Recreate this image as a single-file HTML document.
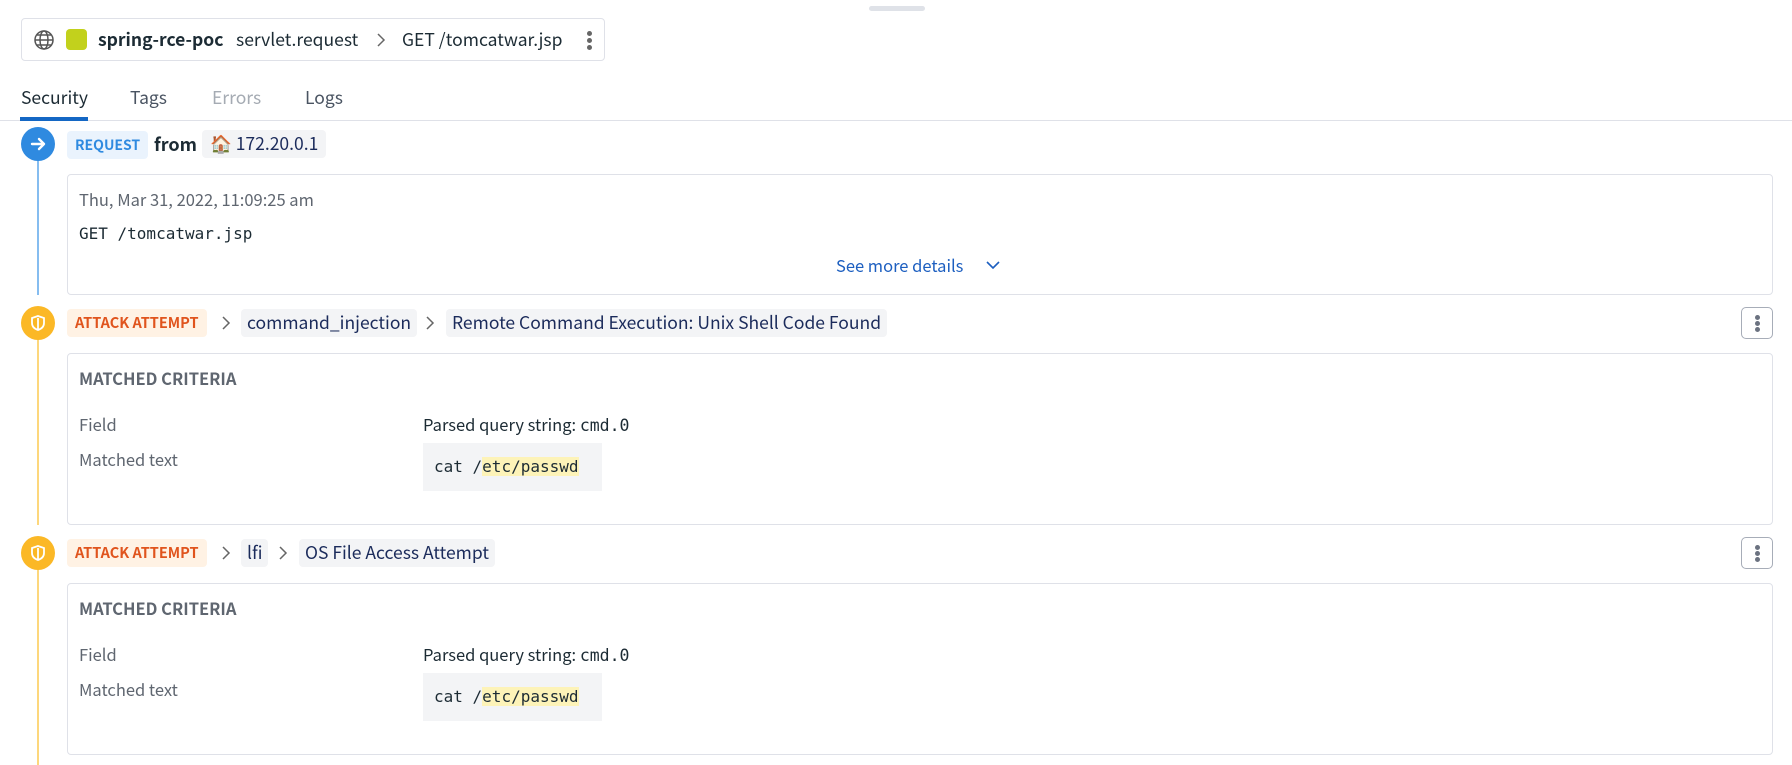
<!DOCTYPE html>
<html><head><meta charset="utf-8"><style>
*{box-sizing:border-box;margin:0;padding:0}
body{width:1792px;height:764px;background:#fff;font-family:"Noto Sans CJK SC","Liberation Sans",sans-serif;color:#1c2b34;position:relative;overflow:hidden;font-size:17px}
.a{position:absolute;white-space:nowrap}
.mono{font-family:"DejaVu Sans Mono","Liberation Mono",monospace}
.pill{position:absolute;height:26px;line-height:26px;border-radius:4px;padding:0 6px;font-size:17.5px}
.card{position:absolute;left:67px;right:19px;border:1px solid #dfe1e8;border-radius:4px}
.keb{position:absolute;left:1741px;width:32px;height:32px;border:1px solid #a7adb8;border-radius:5px}
.keb i{position:absolute;left:13px;width:5px;height:5px;border-radius:50%;background:#6b7280}
.chev{position:absolute}
</style></head><body>
<div class="a" style="left:869px;top:6px;width:56px;height:5px;border-radius:3px;background:#dfe2e8"></div>
<div class="a" style="left:21px;top:18px;width:584px;height:43px;border:1px solid #dfe1e8;border-radius:4px"></div>
<svg class="a" style="left:33px;top:29px" width="22" height="22" viewBox="0 0 22 22" fill="none" stroke="#555" stroke-width="1.5"><circle cx="11" cy="11" r="9"/><ellipse cx="11" cy="11" rx="4" ry="9"/><path d="M2 11h18M4 6h14M4 16h14"/></svg>
<div class="a" style="left:66px;top:29px;width:21px;height:21px;border-radius:4px;background:#c2d11c"></div>
<div class="a" style="left:98px;top:27px;font-weight:700;font-size:17.5px">spring-rce-poc</div>
<div class="a" style="left:236px;top:27px;font-size:17.5px">servlet.request</div>
<svg class="a" style="left:375px;top:33px" width="12" height="14" viewBox="0 0 12 14" fill="none" stroke="#666" stroke-width="1.5"><path d="M3 1l6 6-6 6"/></svg>
<div class="a" style="left:402px;top:27px;font-size:17.5px">GET /tomcatwar.jsp</div>
<div class="a" style="left:587px;top:31px;width:5px;height:5px;border-radius:50%;background:#666;box-shadow:0 7px 0 #666,0 14px 0 #666"></div>

<div class="a" style="left:21px;top:85px;font-size:17.5px">Security</div>
<div class="a" style="left:130px;top:85px;font-size:17.5px;color:#4a5462">Tags</div>
<div class="a" style="left:212px;top:85px;font-size:17.5px;color:#a5abb3">Errors</div>
<div class="a" style="left:305px;top:85px;font-size:17.5px;color:#4a5462">Logs</div>
<div class="a" style="left:0;top:120px;width:1792px;height:1px;background:#dfe1e8"></div>
<div class="a" style="left:20px;top:117px;width:68px;height:4px;background:#1467c4"></div>

<div class="a" style="left:37px;top:150px;width:2px;height:145px;background:#86bdf0"></div>
<div class="a" style="left:21px;top:127px;width:34px;height:34px;border-radius:50%;background:#2f8ae0"></div>
<svg class="a" style="left:28px;top:134px" width="20" height="20" viewBox="0 0 20 20" fill="none" stroke="#fff" stroke-width="2.4" stroke-linecap="round" stroke-linejoin="round"><path d="M4 10h12M11 5l5 5-5 5"/></svg>
<div class="pill" style="left:67px;top:131px;background:#eaf3fd;color:#2f8ae0;font-weight:700;font-size:14px;padding:0 8px;height:28px;line-height:28px">REQUEST</div>
<div class="a" style="left:154px;top:131px;font-weight:700;font-size:18px">from</div>
<div class="pill" style="left:202px;top:130px;background:#f3f4f6;color:#1b2b5b;height:28px;line-height:28px;padding:0 8px">🏠 172.20.0.1</div>
<div class="card" style="top:174px;height:121px"></div>
<div class="a" style="left:79px;top:187px;font-size:16.5px;color:#5f6670">Thu, Mar 31, 2022, 11:09:25 am</div>
<div class="a mono" style="left:79px;top:224px;font-size:16px">GET /tomcatwar.jsp</div>
<div class="a" style="left:836px;top:253px;font-size:16.5px;color:#1d5fc0">See more details</div>
<svg class="a" style="left:985px;top:259px" width="16" height="12" viewBox="0 0 16 12" fill="none" stroke="#1d5fc0" stroke-width="1.6"><path d="M2 3l6 6 6-6"/></svg>

<!-- attack 1 -->
<div class="a" style="left:37px;top:335px;width:2px;height:190px;background:#fdd77c"></div>
<div class="a" style="left:21px;top:306px;width:34px;height:34px;border-radius:50%;background:#fbb826"></div>
<svg class="a" style="left:29px;top:314px" width="18" height="18" viewBox="0 0 18 18" fill="none" stroke="#fff" stroke-width="1.8"><path d="M9 2l6 2v5c0 4-3 6-6 7-3-1-6-3-6-7V4z"/><path d="M9 4v11"/></svg>
<div class="pill" style="left:67px;top:309px;background:#fff2e4;color:#e0541d;font-weight:700;font-size:14.5px;padding:0 8px;height:28px;line-height:28px">ATTACK ATTEMPT</div>
<svg class="chev" style="left:220px;top:316px" width="12" height="14" viewBox="0 0 12 14" fill="none" stroke="#666" stroke-width="1.5"><path d="M3 1l6 6-6 6"/></svg>
<div class="pill" style="left:241px;top:309px;background:#f3f4f6;color:#1b2b5b;height:28px;line-height:28px">command_injection</div>
<svg class="chev" style="left:424px;top:316px" width="12" height="14" viewBox="0 0 12 14" fill="none" stroke="#666" stroke-width="1.5"><path d="M3 1l6 6-6 6"/></svg>
<div class="pill" style="left:446px;top:309px;background:#f3f4f6;color:#1b2b5b;height:28px;line-height:28px">Remote Command Execution: Unix Shell Code Found</div>
<div class="keb" style="top:307px"><i style="top:7px"></i><i style="top:13px"></i><i style="top:19px"></i></div>
<div class="card" style="top:353px;height:172px"></div>
<div class="a" style="left:79px;top:366px;font-weight:700;font-size:16.5px;color:#5f6670">MATCHED CRITERIA</div>
<div class="a" style="left:79px;top:412px;font-size:16.5px;color:#5f6670">Field</div>
<div class="a" style="left:423px;top:412px;font-size:16.5px">Parsed query string: <span class="mono">cmd.0</span></div>
<div class="a" style="left:79px;top:447px;font-size:16.5px;color:#5f6670">Matched text</div>
<div class="a mono" style="left:423px;top:443px;width:179px;height:48px;background:#f3f4f6;padding:13px 11px;font-size:16px;line-height:22px">cat /<span style="background:#fdf3b8">etc/passwd</span></div>

<!-- attack 2 -->
<div class="a" style="left:37px;top:565px;width:2px;height:200px;background:#fdd77c"></div>
<div class="a" style="left:21px;top:536px;width:34px;height:34px;border-radius:50%;background:#fbb826"></div>
<svg class="a" style="left:29px;top:544px" width="18" height="18" viewBox="0 0 18 18" fill="none" stroke="#fff" stroke-width="1.8"><path d="M9 2l6 2v5c0 4-3 6-6 7-3-1-6-3-6-7V4z"/><path d="M9 4v11"/></svg>
<div class="pill" style="left:67px;top:539px;background:#fff2e4;color:#e0541d;font-weight:700;font-size:14.5px;padding:0 8px;height:28px;line-height:28px">ATTACK ATTEMPT</div>
<svg class="chev" style="left:220px;top:546px" width="12" height="14" viewBox="0 0 12 14" fill="none" stroke="#666" stroke-width="1.5"><path d="M3 1l6 6-6 6"/></svg>
<div class="pill" style="left:241px;top:539px;background:#f3f4f6;color:#1b2b5b;height:28px;line-height:28px">lfi</div>
<svg class="chev" style="left:277px;top:546px" width="12" height="14" viewBox="0 0 12 14" fill="none" stroke="#666" stroke-width="1.5"><path d="M3 1l6 6-6 6"/></svg>
<div class="pill" style="left:299px;top:539px;background:#f3f4f6;color:#1b2b5b;height:28px;line-height:28px">OS File Access Attempt</div>
<div class="keb" style="top:537px"><i style="top:7px"></i><i style="top:13px"></i><i style="top:19px"></i></div>
<div class="card" style="top:583px;height:172px"></div>
<div class="a" style="left:79px;top:596px;font-weight:700;font-size:16.5px;color:#5f6670">MATCHED CRITERIA</div>
<div class="a" style="left:79px;top:642px;font-size:16.5px;color:#5f6670">Field</div>
<div class="a" style="left:423px;top:642px;font-size:16.5px">Parsed query string: <span class="mono">cmd.0</span></div>
<div class="a" style="left:79px;top:677px;font-size:16.5px;color:#5f6670">Matched text</div>
<div class="a mono" style="left:423px;top:673px;width:179px;height:48px;background:#f3f4f6;padding:13px 11px;font-size:16px;line-height:22px">cat /<span style="background:#fdf3b8">etc/passwd</span></div>
</body></html>
